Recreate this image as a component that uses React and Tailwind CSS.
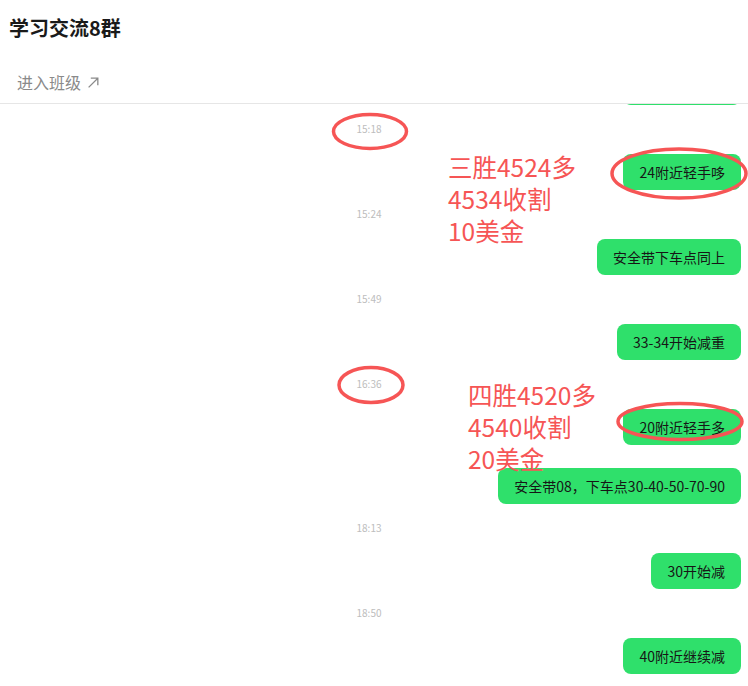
import React from "react";

const FONT = { fontFamily: '"Noto Sans CJK SC", "Noto Sans", sans-serif' };

const items = [
  { t: "b", text: "24附近轻手多", first: true },
  { t: "time", text: "15:18" },
  { t: "b", text: "24附近轻手哆" },
  { t: "time", text: "15:24" },
  { t: "b", text: "安全带下车点同上" },
  { t: "time", text: "15:49" },
  { t: "b", text: "33-34开始减重" },
  { t: "time", text: "16:36" },
  { t: "b", text: "20附近轻手多" },
  { t: "b", text: "安全带08，下车点30-40-50-70-90" },
  { t: "time", text: "18:13" },
  { t: "b", text: "30开始减" },
  { t: "time", text: "18:50" },
  { t: "b", text: "40附近继续减" },
];

function Bubble({ text, className }) {
  return (
    <div className={"flex justify-end pr-[7px] " + className}>
      <div className="rounded-lg bg-[#2fe06b] px-4 py-2 text-[14px] leading-5 text-[#161616]">
        {text}
      </div>
    </div>
  );
}

export default function App() {
  let prev = null;
  return (
    <div className="relative h-[686px] w-[748px] overflow-hidden bg-white" style={FONT}>
      <div className="border-b border-[#e6e6e6] pb-[9px]">
        <div className="mt-[14px] pl-[9px] text-[20px] font-bold leading-[28px] text-[#1a1a1a]">
          学习交流8群
        </div>
        <div className="mt-[28px] flex items-center gap-[6px] pl-[17px] text-[16px] leading-6 text-[#8a8a8a]">
          <span>进入班级</span>
          <svg width="13" height="13" viewBox="0 0 12 12" fill="none" stroke="#8a8a8a" strokeWidth="1.2">
            <path d="M1.5 10.5 L10 2 M3.5 2 H10 V8.5" />
          </svg>
        </div>
      </div>

      <div className="h-[582px] overflow-hidden">
        {items.map((it, i) => {
          let cls = "";
          if (it.t === "time") {
            cls = "mt-[12px]";
          } else if (it.first) {
            cls = "-mt-[35px]";
          } else if (prev === "time") {
            cls = "mt-[13px]";
          } else {
            cls = "mt-[23px]";
          }
          prev = it.t;
          if (it.t === "time") {
            return (
              <div key={i} className={"h-6 pr-[10px] text-center text-[10px] leading-6 text-[#bdbdbd] " + cls}>
                {it.text}
              </div>
            );
          }
          return <Bubble key={i} text={it.text} className={cls} />;
        })}
      </div>

      <svg className="pointer-events-none absolute left-0 top-0" width="748" height="686" fill="none" stroke="#f65555" strokeWidth="3.5">
        <ellipse cx="370" cy="131.5" rx="36.5" ry="17" />
        <ellipse cx="679" cy="173.5" rx="67" ry="24.5" />
        <ellipse cx="371" cy="385" rx="32" ry="17.5" />
        <ellipse cx="680" cy="421.5" rx="62" ry="18" />
      </svg>

      <div className="absolute left-[448px] top-[151px] text-[24.5px] leading-8 text-[#f65555]">
        <div>三胜4524多</div>
        <div>4534收割</div>
        <div>10美金</div>
      </div>
      <div className="absolute left-[468px] top-[379px] text-[24.5px] leading-8 text-[#f65555]">
        <div>四胜4520多</div>
        <div>4540收割</div>
        <div>20美金</div>
      </div>
    </div>
  );
}
